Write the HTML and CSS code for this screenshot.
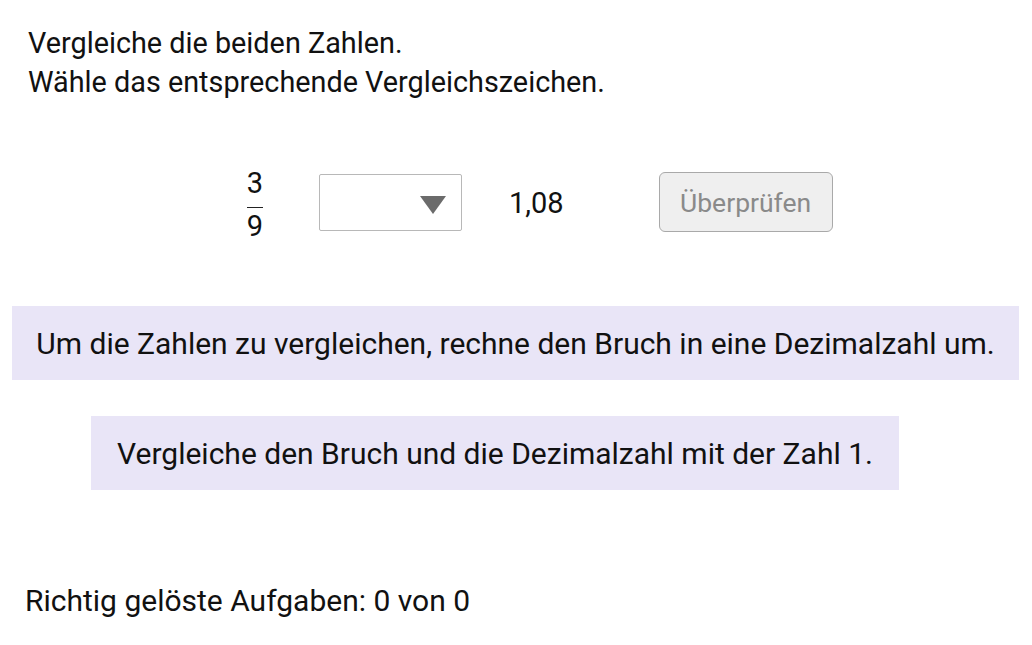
FILE: index.html
```html
<!DOCTYPE html>
<html lang="de">
<head>
<meta charset="utf-8">
<title>Zahlen vergleichen</title>
<link rel="stylesheet" href="styles.css">
</head>
<body>
<div class="page">
  <div class="task">
    <p class="line">Vergleiche die beiden Zahlen.</p>
    <p class="line">Wähle das entsprechende Vergleichszeichen.</p>
  </div>
  <div class="row">
    <div class="frac"><span class="num">3</span><span class="bar"></span><span class="den">9</span></div>
    <div class="select"><svg class="arrow" width="26" height="18" viewBox="0 0 26 18"><polygon points="0,0 26,0 13,18" fill="#6b6b6b"/></svg></div>
    <div class="dec">1,08</div>
    <button class="check">Überprüfen</button>
  </div>
  <div class="hint hint-wide">Um die Zahlen zu vergleichen, rechne den Bruch in eine Dezimalzahl um.</div>
  <div class="hint hint-narrow">Vergleiche den Bruch und die Dezimalzahl mit der Zahl 1.</div>
  <p class="score">Richtig gelöste Aufgaben: 0 von 0</p>
</div>
</body>
</html>
```
FILE: styles.css
```css
html, body { margin: 0; padding: 0; background: #fff; }
body { font-family: "Roboto", "Liberation Sans", Arial, sans-serif; color: #111; }
.page { width: 1032px; height: 645px; }
.task { padding: 24px 0 0 28px; }
.line { margin: 0; font-size: 28.8px; line-height: 39px; }
.row { display: flex; align-items: center; margin-top: 62px; height: 76px; padding-left: 244px; }
.frac { display: flex; flex-direction: column; align-items: center; width: 22px; font-size: 29px; line-height: 24px; margin-top: 5px; }
.num { display: block; }
.den { display: block; }
.bar { display: block; width: 16px; height: 1.5px; background: #222; margin: 12px 0 6px; }
.select { margin-left: 53px; width: 143px; height: 57px; border: 1px solid #b8b8b8; border-radius: 2px; display: flex; align-items: center; justify-content: flex-end; padding-right: 15px; box-sizing: border-box; }
.arrow { display: block; margin-top: 6px; }
.dec { margin-left: 47px; font-size: 29px; margin-top: 2px; }
.check { margin-left: 95px; width: 174px; height: 60px; border: 1px solid #a9a9a9; border-radius: 6px; background: #efefef; color: #8a8a8a; font-family: inherit; font-size: 26.5px; padding: 0; }
.hint { background: #e9e5f7; height: 74px; display: flex; align-items: center; justify-content: center; font-size: 30px; color: #111; }
.hint-wide { margin: 66px 13px 0 12px; }
.hint-narrow { margin: 36px 133px 0 91px; }
.score { margin: 93px 0 0 25px; font-size: 30px; line-height: 36px; }
```
